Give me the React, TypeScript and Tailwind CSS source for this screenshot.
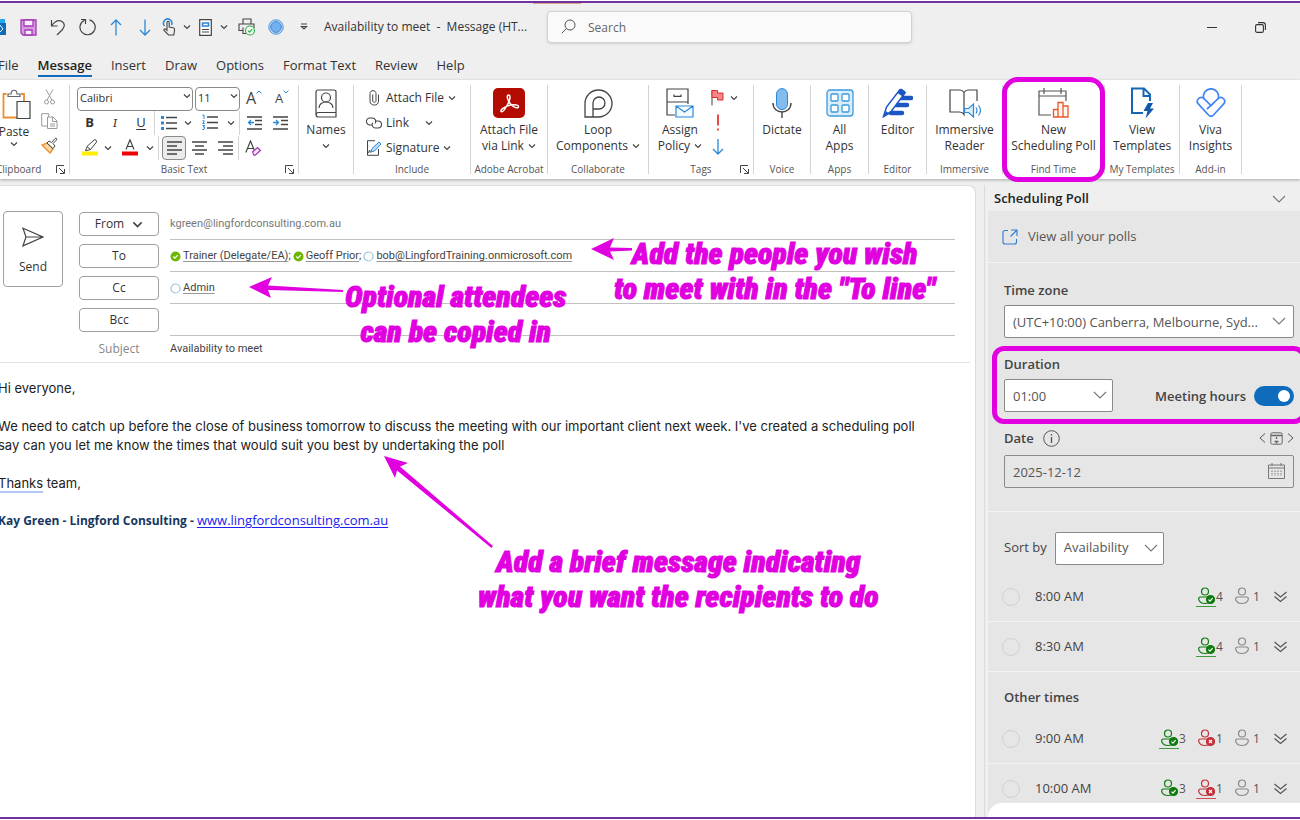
import { useState, type ReactNode } from "react";

const INK = "#444444";
const BLUE = "#2b88d8";
const PINK = "#e000e0";

function Chevron({ className = "", size = 8 }: { className?: string; size?: number }) {
  return (
    <svg width={size} height={size} viewBox="0 0 8 8" fill="none" className={className}>
      <path d="M1 2.500 4 5.500 7 2.500" stroke={INK} strokeWidth="1.200" />
    </svg>
  );
}

function WideChevron({ className = "" }: { className?: string }) {
  return (
    <svg width="14" height="8" viewBox="0 0 14 8" fill="none" className={className}>
      <path d="M1 1 7 7 13 1" stroke="#777" strokeWidth="1.1" />
    </svg>
  );
}

function Launcher() {
  return (
    <svg width="9" height="9" viewBox="0 0 9 9" fill="none" stroke={INK} className="absolute right-1 bottom-0">
      <path d="M.5 8V.5H8M3 3l5 5M8.500 4v4.500H4" />
    </svg>
  );
}

function IconButton({
  label,
  className,
  children,
}: {
  label: string;
  className: string;
  children: ReactNode;
}) {
  return (
    <button aria-label={label} className={`flex h-6 shrink-0 items-center justify-center ${className}`}>
      {children}
    </button>
  );
}

function Group({
  label,
  className,
  launcher,
  highlight,
  children,
}: {
  label?: string;
  className: string;
  launcher?: boolean;
  highlight?: boolean;
  children: ReactNode;
}) {
  return (
    <section className={`relative flex h-[89px] shrink-0 flex-col border-r border-[#d4d4d4] ${className}`}>
      <div className="h-[79px]">{children}</div>
      <div className="text-center text-[10px] leading-[10px] whitespace-nowrap text-[#555]">{label}</div>
      {launcher && <Launcher />}
      {highlight && (
        <div className="pointer-events-none absolute -inset-x-px -top-2 -bottom-2 rounded-2xl border-5 border-[#e000e0]" />
      )}
    </section>
  );
}

function BigButton({
  lines,
  chevron,
  icon,
  className = "w-full",
}: {
  lines: string[];
  chevron?: boolean;
  icon: ReactNode;
  className?: string;
}) {
  return (
    <button className={`flex flex-col items-center pt-[3px] text-[12px] leading-4 whitespace-nowrap text-[#333] ${className}`}>
      <span className="mb-1 flex h-[30px] items-center">{icon}</span>
      {lines.map((line, i) => (
        <span key={line} className="flex items-center gap-1">
          {line}
          {chevron && i === lines.length - 1 && <Chevron />}
        </span>
      ))}
    </button>
  );
}

function TitleBar() {
  return (
    <header className="relative flex h-12 items-center">
      <span className="absolute top-0 left-[533px] h-px w-12 bg-[#d9a88c]" />
      <svg width="6" height="18" viewBox="0 0 6 18" className="mr-[8px] shrink-0">
        <path d="M0 1h5v14H0z" fill="#28a8ea" />
        <path d="M0 5h6v12H0z" fill="#0f6cbd" />
        <path d="m0 7 3 4-3 3" stroke="#fff" fill="none" />
      </svg>
      <IconButton label="Save" className="w-[29px]">
        <svg width="17" height="17" viewBox="0 0 17 17" fill="#d79be0" stroke="#a23ab5" strokeWidth="1.3">
          <path d="M1 1h15v15H3l-2-2z" />
          <path d="M4 1h9v6H4zM5 11h7v5H5z" fill="#f6eef8" />
        </svg>
      </IconButton>
      <IconButton label="Undo" className="w-[29px]">
        <svg width="16" height="17" viewBox="0 0 16 17" fill="none" stroke={INK} strokeWidth="1.2">
          <path d="M1.500 1v6h6M1.500 7C5 2 9 .8 12 2.500c3 2 3 5 .5 8L7 16" />
        </svg>
      </IconButton>
      <IconButton label="Redo" className="w-[29px]">
        <svg width="18" height="18" viewBox="0 0 18 18" fill="none" stroke={INK} strokeWidth="1.2">
          <path d="M3 1.500h4.500V6M6.500 2.200A7.600 7.600 0 1 0 11.500 1.800" />
        </svg>
      </IconButton>
      <IconButton label="Previous item" className="w-[29px]">
        <svg width="12" height="17" viewBox="0 0 12 17" fill="none" stroke={BLUE} strokeWidth="1.3">
          <path d="M6 16.500V1M1 6l5-5 5 5" />
        </svg>
      </IconButton>
      <IconButton label="Next item" className="w-[29px]">
        <svg width="12" height="17" viewBox="0 0 12 17" fill="none" stroke={BLUE} strokeWidth="1.3">
          <path d="M6 .5V16M1 11l5 5 5-5" />
        </svg>
      </IconButton>
      <IconButton label="Touch mode" className="w-5">
        <svg width="14" height="18" viewBox="0 0 14 18" fill="none" strokeWidth="1.1">
          <path d="M2.500 8A4.200 4.200 0 1 1 9.500 7" stroke={BLUE} strokeWidth="1.500" />
          <path
            d="M5 11V4.500c0-1.600 2.200-1.600 2.200 0V9l4 .8c1.300.3 1.600 1 1.400 2l-.8 5.200H6.500L2 12.300c-.6-1 .7-1.800 1.500-1.200L5 12.400z"
            stroke={INK}
            fill="#efefef"
          />
        </svg>
      </IconButton>
      <IconButton label="Touch mode options" className="w-4">
        <Chevron />
      </IconButton>
      <IconButton label="Reading view" className="w-[21px]">
        <svg width="13" height="17" viewBox="0 0 13 17" fill="none" stroke={INK} strokeWidth="1.2">
          <path d="M.7.7h11.600v15.600H.7z" fill="#fff" />
          <path d="M3.500 4h6v3h-6z" stroke={BLUE} strokeWidth="1.600" />
          <path d="M3 10.500h7M3 13h7" />
        </svg>
      </IconButton>
      <IconButton label="View options" className="w-4">
        <Chevron />
      </IconButton>
      <IconButton label="Quick print" className="w-[30px]">
        <svg width="18" height="18" viewBox="0 0 18 18" fill="none" stroke={INK} strokeWidth="1.1">
          <path d="M5 6V1h8v5M5 12.500H1V6h15v4M5 9.500v6h3" />
          <circle cx="12" cy="12.500" r="4.500" stroke="#2aa84a" fill="#f2fbf3" />
          <path d="m10 12.600 1.500 1.500 2.800-3" stroke="#2aa84a" />
        </svg>
      </IconButton>
      <IconButton label="Record" className="w-7">
        <svg width="16" height="16" viewBox="0 0 16 16" fill="none">
          <circle cx="8" cy="8" r="7.200" stroke="#4a90d9" fill="#d5e8fa" />
          <circle cx="8" cy="8" r="5.400" fill="#73b1ee" stroke="#3a86d4" />
        </svg>
      </IconButton>
      <IconButton label="Customize toolbar" className="mr-[6px] w-7">
        <svg width="8" height="8" viewBox="0 0 8 8" fill="none" stroke={INK} strokeWidth="1.2">
          <path d="M1 1h6M1.500 3.500 4 6l2.500-2.500z" />
        </svg>
      </IconButton>
      <h1 className="w-[223px] shrink-0 truncate text-[12px] whitespace-pre text-[#333]">
        {"Availability to meet  -  Message (HT..."}
      </h1>
      <div className="relative">
        <svg
          width="15"
          height="15"
          viewBox="0 0 15 15"
          fill="none"
          stroke="#555"
          className="absolute top-2 left-[14px]"
        >
          <circle cx="9" cy="6" r="5" />
          <path d="M5.500 9.500.8 14.200" />
        </svg>
        <input
          type="search"
          aria-label="Search"
          placeholder="Search"
          className="h-8 w-[365px] rounded-sm border border-[#d2d2d2] bg-[#fafafa] pl-10 text-[12px] shadow-sm placeholder:text-[#666]"
        />
      </div>
      <div className="mr-[28px] ml-auto flex">
        <IconButton label="Minimize" className="w-12">
          <span className="h-px w-[10px] bg-[#333]" />
        </IconButton>
        <IconButton label="Restore" className="-mr-3 w-12">
          <svg width="11" height="11" viewBox="0 0 11 11" fill="none" stroke="#333" strokeWidth="1.1">
            <rect x=".6" y="2.600" width="7.800" height="7.800" rx="1.5" />
            <path d="M3 .6h5c1.500 0 2.400 1 2.400 2.400v5" />
          </svg>
        </IconButton>
      </div>
    </header>
  );
}

const TABS = ["File", "Message", "Insert", "Draw", "Options", "Format Text", "Review", "Help"];

function Tabs() {
  return (
    <nav className="-ml-[2px] flex h-[29px] items-center gap-[19px] pt-px text-[13px] leading-5 text-[#333]">
      {TABS.map((tab) => (
        <a
          key={tab}
          href="#"
          className={
            tab === "Message"
              ? "border-b-2 border-[#0f6cbd] font-semibold text-[#222]"
              : "border-b-2 border-transparent"
          }
        >
          {tab}
        </a>
      ))}
    </nav>
  );
}

function Lines({ d, color = INK }: { d: string; color?: string }) {
  return <path d={d} stroke={color} strokeWidth="1.3" />;
}

function BasicText() {
  const divider = "h-6 w-px bg-[#d4d4d4]";
  return (
    <div className="pl-[7px]">
      <div className="flex h-[25px] items-center gap-[2px]">
        <div className="relative">
          <select
            aria-label="Font"
            className="h-6 w-[116px] appearance-none rounded border border-[#8a8a8a] bg-white pl-[2px] text-[11px] text-[#333]"
          >
            <option>Calibri</option>
          </select>
          <Chevron className="pointer-events-none absolute top-2 right-[2px]" />
        </div>
        <div className="relative">
          <select
            aria-label="Font size"
            className="h-6 w-[45px] appearance-none rounded border border-[#8a8a8a] bg-white pl-[2px] text-[11px] text-[#333]"
          >
            <option>11</option>
          </select>
          <Chevron className="pointer-events-none absolute top-2 right-[2px]" />
        </div>
        <IconButton label="Grow font" className="w-6">
          <span className="text-[16px] leading-6 text-[#444]">A</span>
          <svg width="6" height="4" viewBox="0 0 6 4" fill="none" stroke={BLUE} className="mb-3">
            <path d="M.5 3.500 3 1l2.500 2.500" />
          </svg>
        </IconButton>
        <IconButton label="Shrink font" className="w-7">
          <span className="text-[13px] leading-6 text-[#444]">A</span>
          <svg width="6" height="4" viewBox="0 0 6 4" fill="none" stroke={BLUE} className="mb-3">
            <path d="M.5.5 3 3 5.500.5" />
          </svg>
        </IconButton>
      </div>
      <div className="flex h-[25px] items-center text-[13px] text-[#333]">
        <IconButton label="Bold" className="w-[25px] font-bold">
          B
        </IconButton>
        <IconButton label="Italic" className="w-[26px] font-serif italic">
          I
        </IconButton>
        <IconButton label="Underline" className="w-[26px] underline underline-offset-2">
          U
        </IconButton>
        <span className={divider} />
        <IconButton label="Bullets" className="w-7">
          <svg width="16" height="16" viewBox="0 0 16 16" fill="none">
            <path d="M0 2.500h3M0 8h3M0 13.500h3" stroke={BLUE} strokeWidth="3" />
            <Lines d="M5 2.500h11M5 8h11M5 13.500h11" />
          </svg>
        </IconButton>
        <IconButton label="Bullet styles" className="w-[10px]">
          <Chevron />
        </IconButton>
        <IconButton label="Numbering" className="w-[33px]">
          <svg width="16" height="17" viewBox="0 0 16 17" fill="none">
            <path d="M.5 1.500 2 .8V5M.5 6.800h1.800L.8 9.500h2M.5 11.500h2L1.300 13h1.400L2 15.500H.3" stroke={BLUE} />
            <Lines d="M5 3h11M5 8.500h11M5 14h11" />
          </svg>
        </IconButton>
        <IconButton label="Number styles" className="w-[10px]">
          <Chevron />
        </IconButton>
        <span className={`${divider} ml-[3px]`} />
        <IconButton label="Decrease indent" className="w-7">
          <svg width="15" height="14" viewBox="0 0 15 14" fill="none">
            <Lines d="M0 1h15M8 4.500h7M8 8.500h7M0 13h15" />
            <Lines color={BLUE} d="M7 6.500H1.500M4 4 1.500 6.500 4 9" />
          </svg>
        </IconButton>
        <IconButton label="Increase indent" className="w-6">
          <svg width="15" height="14" viewBox="0 0 15 14" fill="none">
            <Lines d="M0 1h15M8 4.500h7M8 8.500h7M0 13h15" />
            <Lines color={BLUE} d="M0 6.500h5.500M3 4l2.500 2.500L3 9" />
          </svg>
        </IconButton>
      </div>
      <div className="flex h-[25px] items-center">
        <IconButton label="Highlight" className="w-[26px]">
          <svg width="16" height="17" viewBox="0 0 16 17" fill="none">
            <path d="m5 7.500 7-6.500c1.300-1 3.300.8 2.400 2.200L8.500 10.500zM5 7.500 3.500 11.800 8.500 10.500" stroke={INK} />
            <path d="M0 14.500h16" stroke="#ffef00" strokeWidth="4" />
          </svg>
        </IconButton>
        <IconButton label="Highlight colours" className="w-[10px]">
          <Chevron />
        </IconButton>
        <IconButton label="Font colour" className="w-[33px]">
          <svg width="16" height="17" viewBox="0 0 16 17" fill="none">
            <path d="M4 10.500 8 .8l4 9.700M5.300 7.500h5.400" stroke={INK} strokeWidth="1.2" />
            <path d="M0 14.500h16" stroke="#f00000" strokeWidth="4" />
          </svg>
        </IconButton>
        <IconButton label="Font colours" className="w-[8px]">
          <Chevron />
        </IconButton>
        <span className={`${divider} mr-[3px] ml-[4px]`} />
        <IconButton label="Align left" className="w-6 rounded border border-[#8a8a8a] bg-[#ebebeb]">
          <svg width="15" height="14" viewBox="0 0 15 14" fill="none">
            <Lines d="M0 1h15M0 5h10M0 9h15M0 13h10" />
          </svg>
        </IconButton>
        <IconButton label="Align centre" className="w-[26px]">
          <svg width="15" height="14" viewBox="0 0 15 14" fill="none">
            <Lines d="M0 1h15M3 5h9M0 9h15M3 13h9" />
          </svg>
        </IconButton>
        <IconButton label="Align right" className="w-[26px]">
          <svg width="15" height="14" viewBox="0 0 15 14" fill="none">
            <Lines d="M0 1h15M5 5h10M0 9h15M5 13h10" />
          </svg>
        </IconButton>
        <span className={divider} />
        <IconButton label="Clear formatting" className="w-7">
          <svg width="16" height="16" viewBox="0 0 16 16" fill="none">
            <path d="M.8 12.500 5.500 1l3.700 9M2.500 8.500h6" stroke={INK} strokeWidth="1.2" />
            <path d="m7.500 12 5-4.500 2.800 3-5 4.700H9z" stroke="#a23ab5" strokeWidth="1.2" fill="#f4e2f7" />
          </svg>
        </IconButton>
      </div>
    </div>
  );
}

function Ribbon() {
  return (
    <div className="relative z-10 flex h-[99px] bg-white pt-[5px] shadow-[0_1px_3px_rgba(0,0,0,0.3)]">
      <Group label="" className="w-[70px]" launcher>
        <div className="flex">
          <button className="-ml-1 flex w-9 flex-col items-center pt-1 text-[12px] leading-4 text-[#333]">
            <svg width="29" height="31" viewBox="0 0 29 31" fill="none" className="mb-1 ml-[5px]" strokeWidth="1.200">
              <path d="M4.500 5h-3v23.500h14" stroke="#e8912d" strokeWidth="1.800" />
              <path d="M19 5h3v7" stroke="#e8912d" strokeWidth="1.800" />
              <path d="M6 7.500V5h3c0-5 6-5 6 0h3v2.500z" stroke="#666" fill="#fff" />
              <path d="M15 12.500h13v17H15z" stroke={INK} fill="#fafafa" />
            </svg>
            Paste
            <Chevron />
          </button>
          <div className="ml-1 w-[26px]">
            <IconButton label="Cut" className="w-[26px]">
              <svg width="11" height="16" viewBox="0 0 11 16" fill="none" stroke="#9a9a9a">
                <path d="M2 .5 8 11M9 .5 3 11" />
                <circle cx="2.500" cy="13" r="2" />
                <circle cx="8.500" cy="13" r="2" />
              </svg>
            </IconButton>
            <IconButton label="Copy" className="w-[26px]">
              <svg width="17" height="16" viewBox="0 0 17 16" fill="none" stroke="#9a9a9a">
                <path d="M6.500 13H.7V.7h7V4M6.500 4h5.500l4 4v7.500H6.500zM11.500 4v4.500H16M9 11h5M9 13h5" />
              </svg>
            </IconButton>
            <IconButton label="Format painter" className="w-[26px]">
              <svg width="17" height="17" viewBox="0 0 17 17" fill="none">
                <path d="m1 8 8 8 3-4-6-6z" fill="#fbd9a8" stroke="#e8912d" strokeWidth="1.4" />
                <path d="m6 6 2-2 2.500 1.500L14 1.500c1-1 2.500.5 1.500 1.500L12 6.500 14 9l-2 2.500z" fill="#fff" stroke={INK} />
              </svg>
            </IconButton>
          </div>
        </div>
        <div className="absolute bottom-0 -left-1 text-[10px] leading-[10px] text-[#555]">Clipboard</div>
      </Group>

      <Group label="Basic Text" className="w-[229px]" launcher>
        <BasicText />
      </Group>

      <Group className="w-[55px]">
        <BigButton
          lines={["Names"]}
          icon={
            <svg width="22" height="29" viewBox="0 0 22 29" fill="none" stroke={INK} strokeWidth="1.2">
              <path d="M21 23V3c0-1.200-1-2-2-2H3C1.800 1 1 1.800 1 3v22.500c0 1.500 1 2.500 2.500 2.500H21v-4.500H3.500c-3 0-3 4.500 0 4.500" />
              <circle cx="11" cy="8.500" r="4.500" />
              <path d="M4 19c0-8 14-8 14 0" />
            </svg>
          }
        />
        <Chevron className="mx-auto mt-1" />
      </Group>

      <Group label="Include" className="w-[117px]">
        <div className="pl-3 text-[12px] text-[#333]">
          <button className="flex h-[25px] items-center gap-1">
            <svg width="16" height="16" viewBox="0 0 16 16" fill="none" stroke={INK}>
              <path d="M12.500 4.500v6.800c0 5-8.500 5-8.500 0V3.500c0-3.800 6-3.800 6 0v7.300c0 2-3.300 2-3.300 0V4.500" />
            </svg>
            Attach File <Chevron />
          </button>
          <div className="flex h-[25px] items-center">
            <button className="flex items-center gap-1">
              <svg width="16" height="12" viewBox="0 0 16 12" fill="none" stroke={INK} strokeWidth="1.1">
                <path d="M6.500 8H4C-.7 8-.7 1 4 1h2.500c3 0 4 3.500 2.500 5.500M9 4h3c4.700 0 4.700 7 0 7H9.500c-3 0-4.200-3.200-2.700-5.300" />
              </svg>
              Link
            </button>
            <IconButton label="Link options" className="ml-2 w-6">
              <Chevron />
            </IconButton>
          </div>
          <button className="flex h-[25px] items-center gap-1">
            <svg width="16" height="16" viewBox="0 0 16 16" fill="none">
              <path d="M9 .7H1.500v14.600h11V9" stroke={INK} />
              <path d="M4.500 12.500 3.500 10l-1 3" stroke={INK} />
              <path d="m5 12 1-3.500L13 2l2 2-6.500 7z" fill="#bcdcf7" stroke={BLUE} />
            </svg>
            Signature <Chevron />
          </button>
        </div>
      </Group>

      <Group label="Adobe Acrobat" className="w-[77px]">
        <BigButton
          lines={["Attach File", "via Link"]}
          chevron
          icon={
            <svg width="32" height="30" viewBox="0 0 32 30" fill="none">
              <rect width="32" height="30" rx="5" fill="#b30b00" />
              <path
                d="M15.500 7c-2.500 0-.8 6 2.500 9.500 2.500 2.800 7.500 4.800 7.500 2 0-2.600-8-2-12.500.2-4 1.800-6.300 4.200-4.500 5 2.300.8 8.500-10.500 8.500-14.500 0-1.500-.7-2.200-1.500-2.200z"
                stroke="#fff"
                strokeWidth="1.500"
              />
            </svg>
          }
        />
      </Group>

      <Group label="Collaborate" className="w-[101px]">
        <BigButton
          lines={["Loop", "Components"]}
          chevron
          icon={
            <svg width="29" height="29" viewBox="0 0 29 29" fill="none" stroke={INK} strokeWidth="1.3">
              <path d="M1 28V14.500A13.500 13.500 0 1 1 14.500 28z" />
              <path d="M9 28V14a6 6 0 1 1 6 6H9.500" />
            </svg>
          }
        />
      </Group>

      <Group label="Tags" className="w-[105px]" launcher>
        <div className="flex">
          <BigButton
            className="w-[62px]"
            lines={["Assign", "Policy"]}
            chevron
            icon={
              <svg width="28" height="30" viewBox="0 0 28 30" fill="none" stroke={INK} strokeWidth="1.2">
                <path d="M9 27H1V1h21v15M1 14h21M8 6.500v1.800h7V6.500" />
                <path d="M10 18h17v11H10zM10 18l8.500 6 8.500-6" stroke={BLUE} fill="#f3f9fe" />
              </svg>
            }
          />
          <div>
            <div className="flex h-[25px] items-center">
              <IconButton label="Follow up" className="w-[13px]">
                <svg width="13" height="17" viewBox="0 0 13 17" fill="none">
                  <path d="M1 1v15.500" stroke={INK} />
                  <path d="M1 1.500h5.500V4H12v7H6.500V8.500H1z" fill="#f7868a" stroke="#d9302f" />
                </svg>
              </IconButton>
              <IconButton label="Follow up options" className="ml-[2px] w-4">
                <Chevron />
              </IconButton>
            </div>
            <IconButton label="High importance" className="w-[13px]">
              <svg width="4" height="17" viewBox="0 0 4 17" stroke="#e03a35" strokeWidth="1.8">
                <path d="M2 .5v11M2 14.500v2" />
              </svg>
            </IconButton>
            <IconButton label="Low importance" className="w-[13px]">
              <svg width="12" height="17" viewBox="0 0 12 17" fill="none" stroke={BLUE} strokeWidth="1.3">
                <path d="M6 1v15M1 11l5 5 5-5" />
              </svg>
            </IconButton>
          </div>
        </div>
      </Group>

      <Group label="Voice" className="w-[57px]">
        <BigButton
          lines={["Dictate"]}
          icon={
            <svg width="20" height="30" viewBox="0 0 20 30" fill="none">
              <path d="M1 15c0 12 18 12 18 0M10 24v6" stroke={INK} strokeWidth="1.4" />
              <rect x="4.500" y=".6" width="11" height="21" rx="5.500" fill="#83bdee" stroke={BLUE} />
            </svg>
          }
        />
      </Group>

      <Group label="Apps" className="w-[58px]">
        <BigButton
          lines={["All", "Apps"]}
          icon={
            <svg width="28" height="28" viewBox="0 0 28 28" fill="none" stroke="#3a9bdc" strokeWidth="1.3">
              <rect x="1" y="1" width="26" height="26" rx="3" fill="#d9edfb" />
              <g fill="#fff">
                <rect x="5" y="5" width="7" height="7" rx="1" />
                <rect x="16" y="5" width="7" height="7" rx="1" />
                <rect x="5" y="16" width="7" height="7" rx="1" />
                <rect x="16" y="16" width="7" height="7" rx="1" />
              </g>
            </svg>
          }
        />
      </Group>

      <Group label="Editor" className="w-[58px]">
        <BigButton
          lines={["Editor"]}
          icon={
            <svg width="31" height="30" viewBox="0 0 31 30" fill="none">
              <path d="M17 10h12M14 17h11M9 25h11" stroke="#1b56c5" strokeWidth="4.500" strokeLinecap="round" />
              <path d="m1.500 28.500 3-9.500L18 1.500l5 3.500L9.500 23z" fill="#fff" stroke="#1b56c5" strokeWidth="1.500" />
              <path d="m15.500 5 4-4.500 4.500 3.500-3.500 4.500zM1 29.500 4 23l3.500 3z" fill="#1b56c5" />
            </svg>
          }
        />
      </Group>

      <Group label="Immersive" className="w-[76px]">
        <BigButton
          lines={["Immersive", "Reader"]}
          icon={
            <svg width="34" height="30" viewBox="0 0 34 30" fill="none">
              <path d="M16 4.500C15 3 13.500 2 12 2H2v22h9.500c2 0 3.500.8 4.500 2.500zM16 4.500C17 3 18.500 2 20 2h9v11" stroke={INK} strokeWidth="1.2" />
              <path d="M16.500 20.500h4l5-4.500v13l-5-4.500h-4z" stroke={BLUE} strokeWidth="1.2" fill="#d9edfb" />
              <path d="M28 19.500q2 3 0 6M30.500 17.500q4 5 0 10" stroke={BLUE} strokeWidth="1.2" />
            </svg>
          }
        />
      </Group>

      <Group label="Find Time" className="w-[102px]" highlight>
        <BigButton
          lines={["New", "Scheduling Poll"]}
          icon={
            <svg width="31" height="30" viewBox="0 0 31 30" fill="none">
              <path d="M13 27H1V3h27v10M1 8h27M6 0v6M23 0v6" stroke="#555" strokeWidth="1.2" />
              <path d="M15.500 29V21.500h4.500V29zM20 29V14.500h5V29zM25 29V18h5v11z" stroke="#e8582a" strokeWidth="1.3" fill="#fff6f2" />
            </svg>
          }
        />
      </Group>

      <Group label="My Templates" className="w-[75px]">
        <BigButton
          lines={["View", "Templates"]}
          icon={
            <svg width="24" height="32" viewBox="0 0 24 32" fill="none">
              <path d="M13 26H2V1.500h12l6 6V14M13.500 1.500V9H20" stroke="#1668b5" strokeWidth="2" />
              <path d="m18 16-4.500 8h4L15.500 31.500 24 21.500h-4l3-5.500z" fill="#0d5aa7" />
            </svg>
          }
        />
      </Group>

      <Group label="Add-in" className="w-[62px]">
        <BigButton
          lines={["Viva", "Insights"]}
          icon={
            <svg width="30" height="30" viewBox="0 0 30 30" fill="none" stroke="#4285f4" strokeWidth="1.700">
              <path d="M8 11a7.500 7.500 0 1 1 14 0" />
              <path d="M15 17.500 22 10.700c4-3.500 9 1.800 5.500 5.500L17.500 27c-1.500 1.500-3.500 1.500-5 0L2.500 16.200c-3.500-3.700 1.500-9 5.500-5.500z" />
              <path d="m11 21 4-3.500 3-3" />
            </svg>
          }
        />
      </Group>
    </div>
  );
}

function Presence({ available }: { available?: boolean }) {
  return (
    <svg width="11" height="11" viewBox="0 0 11 11" fill="none" className="mr-[2px] shrink-0">
      {available ? (
        <>
          <circle cx="5.500" cy="5.500" r="5" fill="#6bb700" />
          <path d="m3.300 5.500 1.600 1.600 2.900-3" stroke="#fff" strokeWidth="1.3" />
        </>
      ) : (
        <circle cx="5.500" cy="5.500" r="4.500" stroke="#9fc3d6" strokeWidth="1.200" fill="#fff" />
      )}
    </svg>
  );
}

function Recipient({ name, available, last }: { name: string; available?: boolean; last?: boolean }) {
  return (
    <span className="mr-[2px] flex items-center">
      <Presence available={available} />
      <span className="underline decoration-[#999] underline-offset-2">{name}</span>
      {!last && ";"}
    </span>
  );
}

function FieldRow({ button, children }: { button: ReactNode; children: ReactNode }) {
  return (
    <div className="flex h-8 items-center">
      <button className="mr-[11px] flex h-6 w-20 shrink-0 items-center justify-center gap-2 rounded border border-[#a0a0a0] text-[12px] text-[#333]">
        {button}
      </button>
      <div className="flex h-8 flex-1 items-center border-b border-[#c0c0c0] pt-[2px] font-['Roboto',sans-serif] text-[11px] text-[#444]">
        {children}
      </div>
    </div>
  );
}

function Callout({ className, lines }: { className: string; lines: string[] }) {
  return (
    <p
      className={`pointer-events-none absolute text-center font-['Impact','Roboto_Condensed','Roboto',sans-serif] text-[30px] leading-[35px] font-black whitespace-nowrap text-[#e000e0] italic [-webkit-text-stroke:1px_#e000e0] ${className}`}
    >
      {lines.map((line) => (
        <span key={line} className="block">
          {line}
        </span>
      ))}
    </p>
  );
}

function Compose() {
  return (
    <main className="relative mr-2 flex-1 rounded-tr-lg border-t border-r border-[#dcdcdc] bg-white">
      <div className="mr-[5px] flex border-b border-[#e2e2e2] pt-[22px] pr-[15px] pl-[3px]">
        <button className="mt-[3px] mr-4 flex h-[76px] w-[60px] shrink-0 flex-col items-center justify-center gap-3 rounded border border-[#a0a0a0] text-[12px] leading-4 text-[#333]">
          <svg width="22" height="20" viewBox="0 0 22 20" fill="none" stroke={INK} strokeWidth="1.200" className="mt-1">
            <path d="M1 1.200 21 10 1 18.800 4 10zM4 10h16" />
          </svg>
          Send
        </button>
        <div className="flex-1">
          <FieldRow
            button={
              <>
                From <Chevron size={11} />
              </>
            }
          >
            <span className="text-[#777]">kgreen@lingfordconsulting.com.au</span>
          </FieldRow>
          <FieldRow button="To">
            <Recipient name="Trainer (Delegate/EA)" available />
            <Recipient name="Geoff Prior" available />
            <Recipient name="bob@LingfordTraining.onmicrosoft.com" last />
          </FieldRow>
          <FieldRow button="Cc">
            <Recipient name="Admin" last />
          </FieldRow>
          <FieldRow button="Bcc">{null}</FieldRow>
          <div className="flex h-[26px] items-center">
            <label htmlFor="subject" className="mr-[11px] w-20 text-center text-[12px] text-[#888]">
              Subject
            </label>
            <input
              id="subject"
              defaultValue="Availability to meet"
              className="flex-1 font-['Roboto',sans-serif] text-[11px] text-[#444]"
            />
          </div>
        </div>
      </div>

      <div className="-ml-[2px] pt-4 font-['Inter',sans-serif] text-[13px] leading-[19px] text-[#222]">
        <p>Hi everyone,</p>
        <p className="mt-[19px] max-w-[940px]">
          We need to catch up before the close of business tomorrow to discuss the meeting with our important client
          next week. I've created a scheduling poll say can you let me know the times that would suit you best by
          undertaking the poll
        </p>
        <p className="mt-[19px]">
          <span className="border-b-2 border-[#b3c8f5]">Thanks</span> team,
        </p>
        <p className="mt-[18px] font-['Open_Sans',sans-serif] text-[12px] font-bold text-[#17375e]">
          Kay Green - Lingford Consulting -{" "}
          <a href="#" className="text-[13px] font-normal text-[#2020f0] underline underline-offset-2">
            www.lingfordconsulting.com.au
          </a>
        </p>
      </div>

      {/* Notes drawn over the message */}
      <Callout className="top-[50px] left-[614px]" lines={["Add the people you wish", 'to meet with in the "To line"']} />
      <Callout className="top-[93px] left-[345px]" lines={["Optional attendees", "can be copied in"]} />
      <Callout
        className="top-[358px] left-[478px]"
        lines={["Add a brief message indicating", "what you want the recipients to do"]}
      />
      <svg width="44" height="24" viewBox="0 0 44 24" fill={PINK} className="absolute top-[51px] left-[591px]">
        <path d="M0 12 23 1 19 10.500 41 11v2.500L19 14.500 23 23z" />
      </svg>
      <svg width="96" height="22" viewBox="0 0 96 22" fill={PINK} className="absolute top-[91px] left-[249px]">
        <path d="M0 10 23 0 19 8.500 94 13v2L19 13 22 21z" />
      </svg>
      <svg width="110" height="92" viewBox="0 0 110 92" fill={PINK} className="absolute top-[270px] left-[384px]">
        <path d="M0 0 24 7 16 10.500 109 90l-1.500 2L13 14.500 11 22z" />
      </svg>
    </main>
  );
}

const PERSON_STYLES = {
  yes: { color: "#107c10", underline: "border-[#3f9a3f]" },
  no: { color: "#c4313b", underline: "border-[#d04a52]" },
  unknown: { color: "#8a8a8a", underline: "border-transparent" },
};

function Attendee({
  kind,
  count,
  underlined,
}: {
  kind: keyof typeof PERSON_STYLES;
  count: number;
  underlined?: boolean;
}) {
  const { color, underline } = PERSON_STYLES[kind];
  return (
    <span className="flex w-[37px] items-center text-[12px] text-[#555]">
      <span className={`flex w-5 justify-center border-b pb-[1px] ${underlined ? underline : "border-transparent"}`}>
        <svg width="18" height="18" viewBox="0 0 18 18" fill="none" stroke={color} strokeWidth="1.200">
          <circle cx="8" cy="4.500" r="3.500" />
          <path d="M3.500 10h9c3.500 0 2 6.500-4.500 6.500S0 10 3.500 10z" />
          {kind !== "unknown" && <circle cx="13.500" cy="12.500" r="4" fill={color} />}
          {kind === "yes" && <path d="m11.500 12.600 1.500 1.500 2.600-2.900" stroke="#fff" />}
          {kind === "no" && <path d="m12 11 3 3m0-3-3 3" stroke="#fff" />}
        </svg>
      </span>
      {count}
    </span>
  );
}

function TimeRow({ time, last, children }: { time: string; last?: boolean; children: ReactNode }) {
  return (
    <div
      className={`flex h-[50px] items-center border-b pr-[10px] pl-[14px] ${last ? "border-transparent" : "border-[#f2f2f2]"}`}
    >
      <label className="flex flex-1 items-center gap-[15px] text-[13px] text-[#444]">
        <input
          type="radio"
          name="slot"
          className="size-[18px] appearance-none rounded-full border border-[#d0d0d0] checked:bg-[#0f6cbd]"
        />
        {time}
      </label>
      {children}
      <button aria-label={`Show attendees for ${time}`} className="flex w-5 justify-center">
        <svg width="13" height="12" viewBox="0 0 13 12" fill="none" stroke="#555" strokeWidth="1.200">
          <path d="m.5 1 6 5 6-5M.5 5.500l6 5 6-5" />
        </svg>
      </button>
    </div>
  );
}

const selectClass = "h-[33px] w-full appearance-none rounded-xs border border-[#8a8a8a] bg-white pl-2 text-[13px] text-[#555]";

function SchedulingPoll() {
  const [meetingHours, setMeetingHours] = useState(true);

  return (
    <aside className="relative flex w-[316px] shrink-0 flex-col border-l border-[#dadada] pl-[3px]">
      <div className="flex h-[26px] items-center justify-between pt-[2px] pr-[14px] pl-[6px]">
        <h2 className="text-[13px] font-semibold text-[#222]">Scheduling Poll</h2>
        <button aria-label="Collapse pane">
          <WideChevron />
        </button>
      </div>
      <div className="flex-1 bg-[#e6e6e6]">
        <div className="flex h-[52px] items-center border-b border-[#f2f2f2] pl-[14px]">
          <a href="#" className="flex items-center gap-[10px] text-[13px] text-[#555]">
            <svg width="16" height="16" viewBox="0 0 16 16" fill="none" stroke="#2b7cd3" strokeWidth="1.100">
              <path d="M6 1.500H3C1.700 1.500 1 2.200 1 3.500V13c0 1.300.7 2 2 2h9.500c1.300 0 2-.7 2-2v-3M9 1h6v6M15 1 8.500 7.500" />
            </svg>
            View all your polls
          </a>
        </div>

        <div className="border-b border-[#f2f2f2] pt-[17px] pr-[6px] pb-[23px] pl-4 text-[13px] leading-5 text-[#444]">
          <label htmlFor="zone" className="font-semibold">
            Time zone
          </label>
          <div className="relative mt-[5px]">
            <select id="zone" className={selectClass}>
              <option>(UTC+10:00) Canberra, Melbourne, Syd...</option>
            </select>
            <WideChevron className="pointer-events-none absolute top-3 right-2" />
          </div>

          <div className="relative mt-4">
            <label htmlFor="duration" className="font-semibold">
              Duration
            </label>
            <div className="mt-[5px] flex items-center justify-between">
              <div className="relative w-[109px]">
                <select id="duration" className={selectClass}>
                  <option>01:00</option>
                </select>
                <WideChevron className="pointer-events-none absolute top-3 right-[6px]" />
              </div>
              <label className="flex items-center gap-2 font-semibold">
                Meeting hours
                <input
                  type="checkbox"
                  role="switch"
                  checked={meetingHours}
                  onChange={(e) => setMeetingHours(e.target.checked)}
                  className="h-5 w-10 appearance-none rounded-full bg-[#8a8a8a] p-1 before:block before:size-3 before:rounded-full before:bg-white checked:bg-[#0f6cbd] checked:before:ml-5"
                />
              </label>
            </div>
            <div className="pointer-events-none absolute -inset-x-3 -top-2 -bottom-3 rounded-xl border-5 border-[#e000e0]" />
          </div>

          <div className="mt-4 flex items-center">
            <label htmlFor="date" className="font-semibold">
              Date
            </label>
            <svg width="17" height="17" viewBox="0 0 17 17" fill="none" stroke="#555" className="ml-[9px]">
              <circle cx="8.500" cy="8.500" r="7.800" />
              <path d="M8.500 7v6M8.500 4v1.500" strokeWidth="1.300" />
            </svg>
            <div className="ml-auto flex items-center gap-1">
              <button aria-label="Previous day">
                <svg width="7" height="10" viewBox="0 0 7 10" fill="none" stroke="#555">
                  <path d="M6 .5 1 5l5 4.500" />
                </svg>
              </button>
              <button aria-label="Today">
                <svg width="13" height="13" viewBox="0 0 13 13" fill="none" stroke="#666">
                  <rect x=".8" y=".8" width="11.400" height="11.400" rx="1.5" />
                  <path d="M1 3.500h11M6.500 5v2M6.500 9v2.500M4.500 9.500h4" strokeWidth="1.300" />
                </svg>
              </button>
              <button aria-label="Next day">
                <svg width="7" height="10" viewBox="0 0 7 10" fill="none" stroke="#555">
                  <path d="m1 .5 5 4.500-5 4.500" />
                </svg>
              </button>
            </div>
          </div>
          <div className="relative mt-[7px]">
            <input
              id="date"
              defaultValue="2025-12-12"
              className="h-[33px] w-full rounded-xs border border-[#8a8a8a] bg-transparent pl-2 text-[13px] text-[#555]"
            />
            <svg width="17" height="16" viewBox="0 0 17 16" fill="none" stroke="#777" className="absolute top-2 right-[9px]">
              <path d="M.5 2h16v13.500H.5zM.5 5h16M4 0v3M13 0v3" />
              <path d="M4 7.500V13M7 7.500V13M10 7.500V13M13 7.500V13" strokeDasharray="1.500 1" />
            </svg>
          </div>
        </div>

        <div className="flex h-[60px] items-center gap-2 pt-[12px] pl-4 text-[13px] text-[#444]">
          <label htmlFor="sort">Sort by</label>
          <div className="relative w-[109px]">
            <select id="sort" className={selectClass}>
              <option>Availability</option>
            </select>
            <WideChevron className="pointer-events-none absolute top-3 right-[6px]" />
          </div>
        </div>

        <TimeRow time="8:00 AM">
          <Attendee kind="yes" count={4} underlined />
          <Attendee kind="unknown" count={1} />
        </TimeRow>
        <TimeRow time="8:30 AM">
          <Attendee kind="yes" count={4} underlined />
          <Attendee kind="unknown" count={1} />
        </TimeRow>
        <h3 className="h-[42px] pt-[15px] pl-4 text-[13px] leading-5 font-semibold text-[#444]">Other times</h3>
        <TimeRow time="9:00 AM">
          <Attendee kind="yes" count={3} underlined />
          <Attendee kind="no" count={1} />
          <Attendee kind="unknown" count={1} />
        </TimeRow>
        <TimeRow time="10:00 AM" last>
          <Attendee kind="yes" count={3} />
          <Attendee kind="no" count={1} underlined />
          <Attendee kind="unknown" count={1} />
        </TimeRow>
      </div>
      <div className="absolute right-0 bottom-0 left-[3px] h-[14px] rounded-tl-2xl bg-white" />
    </aside>
  );
}

export default function App() {
  return (
    <div className="flex min-h-screen flex-col overflow-hidden bg-white py-px font-['Open_Sans',sans-serif]">
      <div className="flex flex-1 flex-col border-y-2 border-[#7030a0] bg-[#efefef]">
        <TitleBar />
        <Tabs />
        <Ribbon />
        <div className="flex flex-1 pt-[6px]">
          <Compose />
          <SchedulingPoll />
        </div>
      </div>
    </div>
  );
}
